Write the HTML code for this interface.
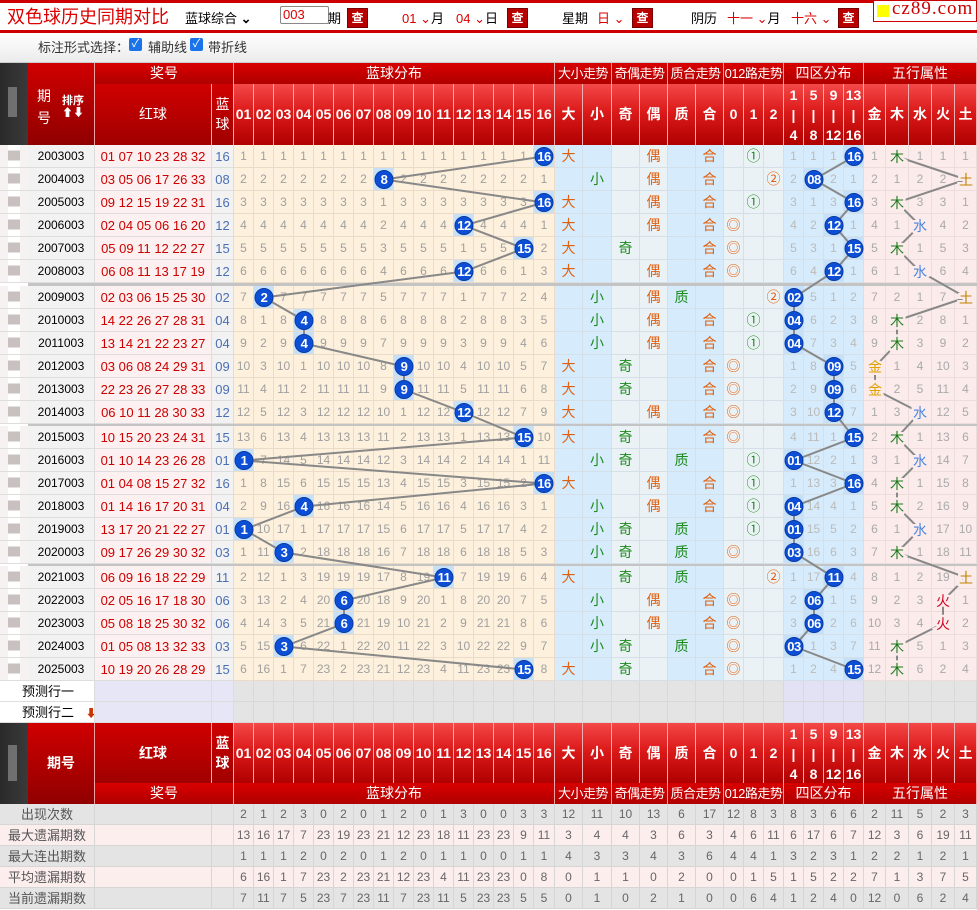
<!DOCTYPE html>
<html><head><meta charset="utf-8"><style>
body{margin:0;width:977px;height:910px;position:relative;overflow:hidden;font-family:"Liberation Sans","Noto Sans CJK SC",sans-serif;font-size:12px;background:#fff}
.a{position:absolute}
.r{position:absolute;left:0;width:977px;height:23px;display:flex}
.r i{font-style:normal;box-sizing:border-box;height:23px;line-height:23px;text-align:center;border-right:1px solid #ddd;border-bottom:1px solid #ddd;flex:none;overflow:hidden;white-space:nowrap}
.r i:nth-child(1){width:28px;background:linear-gradient(#fff 0 25%,#c9c0c0 25% 70%,#fff 70%) 8px 0/12px 100% no-repeat,#f6f2f2;border-right:0}
.r i:nth-child(2){width:67px;background:#f2f2f2}
.r i:nth-child(3){width:117px;background:#fdf0f0;color:#c00;font-size:13px}
.r i:nth-child(4){width:22px;background:#f2f2f2;color:#4a6fb5;font-size:13px}
.r i:nth-child(n+5){width:20px;background:#fdf0dc;color:#a0a0a0;border-color:#eadcc8}
.r i:nth-child(20){width:21px}
.r i:nth-child(n+21){width:28px;background:#d6ebfb;border-color:#d4dfe8;font-size:14px}
.r i:nth-child(22){width:29px}
.r i:nth-child(23),.r i:nth-child(24),.r i:nth-child(27),.r i:nth-child(28),.r i:nth-child(29){background:#ebf2f6}
.r i:nth-child(n+27){width:20px}
.r i:nth-child(n+30){background:#d6ebfb;color:#bbb;font-size:12px}
.r i:nth-child(n+34){background:#fbebeb;color:#aaa;border-color:#ecdcdc}
.r i:nth-child(34),.r i:nth-child(38){width:22px}
.r i:nth-child(35),.r i:nth-child(36),.r i:nth-child(37){width:23px}
.r i.h{background:#c6e0fa}
.r i.o{color:#e06010}.r i.g{color:#1a8a1a}
.sep{position:absolute;left:28px;width:949px;background:#c4c4c4}
.q i,.s i{height:21px;line-height:21px}
.q,.s{height:21px}
.q i:first-child,.s i:first-child{width:0;border:0;background:none}
.q i:nth-child(2),.s i:nth-child(2){width:95px}
.q i:nth-child(2){background:#fff;text-align:left;padding-left:22px;color:#000;font-size:13px}
.q i:nth-child(3),.q i:nth-child(4){background:#e6e6f6}
.q i:nth-child(n+5){background:#e4e4e4;border-color:#d8d8d8}
.q i:nth-child(30),.q i:nth-child(31),.q i:nth-child(32),.q i:nth-child(33){background:#e2e2f4}
.s i{background:#e4e4e4 !important;color:#666 !important;font-size:12px !important;border-color:#d6d6d6 !important}
.s.p i{background:#fdeeee !important}
.s i:nth-child(2){color:#555 !important;font-size:13px !important}
.hd{position:absolute;color:#fff;text-align:center;box-sizing:border-box;border-right:1px solid #f0a0a0;font-size:14px;white-space:nowrap;overflow:hidden}
.h1{background:linear-gradient(#d80000,#b00000);height:21px;line-height:21px}
.sm{font-size:13px;letter-spacing:-0.5px}
.hn{display:flex;position:absolute;height:61px}
.hn div{box-sizing:border-box;border-right:1px solid #f4b0b0;background:linear-gradient(#f44848,#dc1a1a 45%,#b00000);color:#fff;font-weight:bold;font-size:14px;text-align:center;line-height:61px;flex:none}
.hn div.v{line-height:20px;padding-top:1px}
.btn{position:absolute;width:19px;height:18px;background:#b80000;color:#fff;font-size:12px;font-weight:bold;text-align:center;line-height:18px;border:1px solid #700}
.t{position:absolute;font-size:13px;top:8px}
.red{color:#d00}
.cb{position:absolute;top:38px;width:13px;height:13px;background:#1a73e8;border-radius:2px;color:#fff;font-size:11px;line-height:13px;text-align:center}
</style></head><body>

<div class="a" style="left:0;top:0;width:977px;height:3px;background:#c00"></div>
<div class="a" style="left:0;top:30px;width:977px;height:3px;background:#c00"></div>
<div class="a" style="left:7px;top:5px;font-size:18px;color:#d00;font-family:'Noto Sans CJK SC',sans-serif;line-height:22px">双色球历史同期对比</div>
<div class="t" style="left:185px">蓝球综合 <b>⌄</b></div>
<div class="a" style="left:280px;top:6px;width:45px;height:16px;border:1px solid #888;border-radius:2px;color:#d00;font-size:13px;line-height:16px;padding-left:2px;box-sizing:content-box">003</div>
<div class="t" style="left:328px">期</div>
<div class="btn" style="left:347px;top:8px">查</div>
<div class="t red" style="left:402px">01 ⌄<span style="color:#000">月</span></div>
<div class="t red" style="left:456px">04 ⌄<span style="color:#000">日</span></div>
<div class="btn" style="left:507px;top:8px">查</div>
<div class="t" style="left:562px">星期</div>
<div class="t red" style="left:597px">日 ⌄</div>
<div class="btn" style="left:632px;top:8px">查</div>
<div class="t" style="left:691px">阴历</div>
<div class="t red" style="left:727px">十一 ⌄<span style="color:#000">月</span></div>
<div class="t red" style="left:791px">十六 ⌄</div>
<div class="btn" style="left:838px;top:8px">查</div>
<div class="a" style="left:873px;top:0;width:102px;height:20px;border:1px solid #c00;background:#fff"></div>
<div class="a" style="left:877px;top:5px;width:12px;height:12px;background:#ff0"></div>
<div class="a" style="left:892px;top:-2px;font-family:'Liberation Serif',serif;font-size:19px;color:#c00;letter-spacing:1px">cz89.com</div>

<div class="a" style="left:0;top:33px;width:977px;height:29px;background:linear-gradient(#fff,#ebebeb);border-bottom:1px solid #ccc"></div>
<div class="a" style="left:38px;top:37px;font-size:13px;color:#333">标注形式选择：</div>
<div class="cb" style="left:129px">✓</div>
<div class="a" style="left:148px;top:37px;font-size:13px;color:#333">辅助线</div>
<div class="cb" style="left:190px">✓</div>
<div class="a" style="left:208px;top:37px;font-size:13px;color:#333">带折线</div>

<div class="a" style="left:0;top:63px;width:28px;height:82px;background:linear-gradient(90deg,#2a2a2a,#3a3a3a)"><div style="position:absolute;left:8px;top:24px;width:9px;height:30px;background:#8a8a8a;opacity:.7"></div></div>
<div class="hd" style="left:28px;top:63px;width:67px;height:82px;background:linear-gradient(#d00000,#900000)"><div style="position:absolute;left:9px;top:22px;line-height:22px">期<br>号</div><div style="position:absolute;left:34px;top:32px;font-size:11px;font-weight:bold;line-height:12px">排序<br>⬆⬇</div></div>
<div class="hd h1" style="left:95px;top:63px;width:139px">奖号</div>
<div class="hd h1" style="left:234px;top:63px;width:321px">蓝球分布</div>
<div class="hd h1 sm" style="left:555px;top:63px;width:57px">大小走势</div>
<div class="hd h1 sm" style="left:612px;top:63px;width:56px">奇偶走势</div>
<div class="hd h1 sm" style="left:668px;top:63px;width:56px">质合走势</div>
<div class="hd h1 sm" style="left:724px;top:63px;width:60px">012路走势</div>
<div class="hd h1" style="left:784px;top:63px;width:80px">四区分布</div>
<div class="hd h1" style="left:864px;top:63px;width:113px">五行属性</div>
<div class="hn" style="left:95px;top:84px">
<div style="width:117px;background:linear-gradient(#d00000,#a00000);font-weight:normal">红球</div><div class="v" style="width:22px;background:linear-gradient(#d00000,#a00000);font-weight:normal;padding-top:10px">蓝<br>球</div>
<div style="width:20px">01</div><div style="width:20px">02</div><div style="width:20px">03</div><div style="width:20px">04</div><div style="width:20px">05</div><div style="width:20px">06</div><div style="width:20px">07</div><div style="width:20px">08</div><div style="width:20px">09</div><div style="width:20px">10</div><div style="width:20px">11</div><div style="width:20px">12</div><div style="width:20px">13</div><div style="width:20px">14</div><div style="width:20px">15</div><div style="width:21px">16</div>
<div style="width:28px">大</div><div style="width:29px">小</div><div style="width:28px">奇</div><div style="width:28px">偶</div><div style="width:28px">质</div><div style="width:28px">合</div><div style="width:20px">0</div><div style="width:20px">1</div><div style="width:20px">2</div>
<div class="v" style="width:20px">1<br>|<br>4</div><div class="v" style="width:20px">5<br>|<br>8</div><div class="v" style="width:20px">9<br>|<br>12</div><div class="v" style="width:20px">13<br>|<br>16</div>
<div style="width:22px">金</div><div style="width:23px">木</div><div style="width:23px">水</div><div style="width:23px">火</div><div style="width:22px">土</div>
</div>

<div class="r" style="top:145px"><i></i><i>2003003</i><i>01 07 10 23 28 32</i><i>16</i><i>1</i><i>1</i><i>1</i><i>1</i><i>1</i><i>1</i><i>1</i><i>1</i><i>1</i><i>1</i><i>1</i><i>1</i><i>1</i><i>1</i><i>1</i><i class="h"></i><i class="o">大</i><i></i><i></i><i class="o">偶</i><i></i><i class="o">合</i><i></i><i class="g">①</i><i></i><i>1</i><i>1</i><i>1</i><i class="h"></i><i>1</i><i></i><i>1</i><i>1</i><i>1</i></div>
<div class="r" style="top:168px"><i></i><i>2004003</i><i>03 05 06 17 26 33</i><i>08</i><i>2</i><i>2</i><i>2</i><i>2</i><i>2</i><i>2</i><i>2</i><i class="h"></i><i>2</i><i>2</i><i>2</i><i>2</i><i>2</i><i>2</i><i>2</i><i>1</i><i></i><i class="g">小</i><i></i><i class="o">偶</i><i></i><i class="o">合</i><i></i><i></i><i class="o">②</i><i>2</i><i class="h"></i><i>2</i><i>1</i><i>2</i><i>1</i><i>2</i><i>2</i><i></i></div>
<div class="r" style="top:191px"><i></i><i>2005003</i><i>09 12 15 19 22 31</i><i>16</i><i>3</i><i>3</i><i>3</i><i>3</i><i>3</i><i>3</i><i>3</i><i>1</i><i>3</i><i>3</i><i>3</i><i>3</i><i>3</i><i>3</i><i>3</i><i class="h"></i><i class="o">大</i><i></i><i></i><i class="o">偶</i><i></i><i class="o">合</i><i></i><i class="g">①</i><i></i><i>3</i><i>1</i><i>3</i><i class="h"></i><i>3</i><i></i><i>3</i><i>3</i><i>1</i></div>
<div class="r" style="top:214px"><i></i><i>2006003</i><i>02 04 05 06 16 20</i><i>12</i><i>4</i><i>4</i><i>4</i><i>4</i><i>4</i><i>4</i><i>4</i><i>2</i><i>4</i><i>4</i><i>4</i><i class="h"></i><i>4</i><i>4</i><i>4</i><i>1</i><i class="o">大</i><i></i><i></i><i class="o">偶</i><i></i><i class="o">合</i><i class="o">◎</i><i></i><i></i><i>4</i><i>2</i><i class="h"></i><i>1</i><i>4</i><i>1</i><i></i><i>4</i><i>2</i></div>
<div class="r" style="top:237px"><i></i><i>2007003</i><i>05 09 11 12 22 27</i><i>15</i><i>5</i><i>5</i><i>5</i><i>5</i><i>5</i><i>5</i><i>5</i><i>3</i><i>5</i><i>5</i><i>5</i><i>1</i><i>5</i><i>5</i><i class="h"></i><i>2</i><i class="o">大</i><i></i><i class="g">奇</i><i></i><i></i><i class="o">合</i><i class="o">◎</i><i></i><i></i><i>5</i><i>3</i><i>1</i><i class="h"></i><i>5</i><i></i><i>1</i><i>5</i><i>3</i></div>
<div class="r" style="top:260px"><i></i><i>2008003</i><i>06 08 11 13 17 19</i><i>12</i><i>6</i><i>6</i><i>6</i><i>6</i><i>6</i><i>6</i><i>6</i><i>4</i><i>6</i><i>6</i><i>6</i><i class="h"></i><i>6</i><i>6</i><i>1</i><i>3</i><i class="o">大</i><i></i><i></i><i class="o">偶</i><i></i><i class="o">合</i><i class="o">◎</i><i></i><i></i><i>6</i><i>4</i><i class="h"></i><i>1</i><i>6</i><i>1</i><i></i><i>6</i><i>4</i></div>
<div class="sep" style="top:283px;height:3px"></div>
<div class="r" style="top:286px"><i></i><i>2009003</i><i>02 03 06 15 25 30</i><i>02</i><i>7</i><i class="h"></i><i>7</i><i>7</i><i>7</i><i>7</i><i>7</i><i>5</i><i>7</i><i>7</i><i>7</i><i>1</i><i>7</i><i>7</i><i>2</i><i>4</i><i></i><i class="g">小</i><i></i><i class="o">偶</i><i class="g">质</i><i></i><i></i><i></i><i class="o">②</i><i class="h"></i><i>5</i><i>1</i><i>2</i><i>7</i><i>2</i><i>1</i><i>7</i><i></i></div>
<div class="r" style="top:309px"><i></i><i>2010003</i><i>14 22 26 27 28 31</i><i>04</i><i>8</i><i>1</i><i>8</i><i class="h"></i><i>8</i><i>8</i><i>8</i><i>6</i><i>8</i><i>8</i><i>8</i><i>2</i><i>8</i><i>8</i><i>3</i><i>5</i><i></i><i class="g">小</i><i></i><i class="o">偶</i><i></i><i class="o">合</i><i></i><i class="g">①</i><i></i><i class="h"></i><i>6</i><i>2</i><i>3</i><i>8</i><i></i><i>2</i><i>8</i><i>1</i></div>
<div class="r" style="top:332px"><i></i><i>2011003</i><i>13 14 21 22 23 27</i><i>04</i><i>9</i><i>2</i><i>9</i><i class="h"></i><i>9</i><i>9</i><i>9</i><i>7</i><i>9</i><i>9</i><i>9</i><i>3</i><i>9</i><i>9</i><i>4</i><i>6</i><i></i><i class="g">小</i><i></i><i class="o">偶</i><i></i><i class="o">合</i><i></i><i class="g">①</i><i></i><i class="h"></i><i>7</i><i>3</i><i>4</i><i>9</i><i></i><i>3</i><i>9</i><i>2</i></div>
<div class="r" style="top:355px"><i></i><i>2012003</i><i>03 06 08 24 29 31</i><i>09</i><i>10</i><i>3</i><i>10</i><i>1</i><i>10</i><i>10</i><i>10</i><i>8</i><i class="h"></i><i>10</i><i>10</i><i>4</i><i>10</i><i>10</i><i>5</i><i>7</i><i class="o">大</i><i></i><i class="g">奇</i><i></i><i></i><i class="o">合</i><i class="o">◎</i><i></i><i></i><i>1</i><i>8</i><i class="h"></i><i>5</i><i></i><i>1</i><i>4</i><i>10</i><i>3</i></div>
<div class="r" style="top:378px"><i></i><i>2013003</i><i>22 23 26 27 28 33</i><i>09</i><i>11</i><i>4</i><i>11</i><i>2</i><i>11</i><i>11</i><i>11</i><i>9</i><i class="h"></i><i>11</i><i>11</i><i>5</i><i>11</i><i>11</i><i>6</i><i>8</i><i class="o">大</i><i></i><i class="g">奇</i><i></i><i></i><i class="o">合</i><i class="o">◎</i><i></i><i></i><i>2</i><i>9</i><i class="h"></i><i>6</i><i></i><i>2</i><i>5</i><i>11</i><i>4</i></div>
<div class="r" style="top:401px"><i></i><i>2014003</i><i>06 10 11 28 30 33</i><i>12</i><i>12</i><i>5</i><i>12</i><i>3</i><i>12</i><i>12</i><i>12</i><i>10</i><i>1</i><i>12</i><i>12</i><i class="h"></i><i>12</i><i>12</i><i>7</i><i>9</i><i class="o">大</i><i></i><i></i><i class="o">偶</i><i></i><i class="o">合</i><i class="o">◎</i><i></i><i></i><i>3</i><i>10</i><i class="h"></i><i>7</i><i>1</i><i>3</i><i></i><i>12</i><i>5</i></div>
<div class="sep" style="top:424px;height:2px"></div>
<div class="r" style="top:426px"><i></i><i>2015003</i><i>10 15 20 23 24 31</i><i>15</i><i>13</i><i>6</i><i>13</i><i>4</i><i>13</i><i>13</i><i>13</i><i>11</i><i>2</i><i>13</i><i>13</i><i>1</i><i>13</i><i>13</i><i class="h"></i><i>10</i><i class="o">大</i><i></i><i class="g">奇</i><i></i><i></i><i class="o">合</i><i class="o">◎</i><i></i><i></i><i>4</i><i>11</i><i>1</i><i class="h"></i><i>2</i><i></i><i>1</i><i>13</i><i>6</i></div>
<div class="r" style="top:449px"><i></i><i>2016003</i><i>01 10 14 23 26 28</i><i>01</i><i class="h"></i><i>7</i><i>14</i><i>5</i><i>14</i><i>14</i><i>14</i><i>12</i><i>3</i><i>14</i><i>14</i><i>2</i><i>14</i><i>14</i><i>1</i><i>11</i><i></i><i class="g">小</i><i class="g">奇</i><i></i><i class="g">质</i><i></i><i></i><i class="g">①</i><i></i><i class="h"></i><i>12</i><i>2</i><i>1</i><i>3</i><i>1</i><i></i><i>14</i><i>7</i></div>
<div class="r" style="top:472px"><i></i><i>2017003</i><i>01 04 08 15 27 32</i><i>16</i><i>1</i><i>8</i><i>15</i><i>6</i><i>15</i><i>15</i><i>15</i><i>13</i><i>4</i><i>15</i><i>15</i><i>3</i><i>15</i><i>15</i><i>2</i><i class="h"></i><i class="o">大</i><i></i><i></i><i class="o">偶</i><i></i><i class="o">合</i><i></i><i class="g">①</i><i></i><i>1</i><i>13</i><i>3</i><i class="h"></i><i>4</i><i></i><i>1</i><i>15</i><i>8</i></div>
<div class="r" style="top:495px"><i></i><i>2018003</i><i>01 14 16 17 20 31</i><i>04</i><i>2</i><i>9</i><i>16</i><i class="h"></i><i>16</i><i>16</i><i>16</i><i>14</i><i>5</i><i>16</i><i>16</i><i>4</i><i>16</i><i>16</i><i>3</i><i>1</i><i></i><i class="g">小</i><i></i><i class="o">偶</i><i></i><i class="o">合</i><i></i><i class="g">①</i><i></i><i class="h"></i><i>14</i><i>4</i><i>1</i><i>5</i><i></i><i>2</i><i>16</i><i>9</i></div>
<div class="r" style="top:518px"><i></i><i>2019003</i><i>13 17 20 21 22 27</i><i>01</i><i class="h"></i><i>10</i><i>17</i><i>1</i><i>17</i><i>17</i><i>17</i><i>15</i><i>6</i><i>17</i><i>17</i><i>5</i><i>17</i><i>17</i><i>4</i><i>2</i><i></i><i class="g">小</i><i class="g">奇</i><i></i><i class="g">质</i><i></i><i></i><i class="g">①</i><i></i><i class="h"></i><i>15</i><i>5</i><i>2</i><i>6</i><i>1</i><i></i><i>17</i><i>10</i></div>
<div class="r" style="top:541px"><i></i><i>2020003</i><i>09 17 26 29 30 32</i><i>03</i><i>1</i><i>11</i><i class="h"></i><i>2</i><i>18</i><i>18</i><i>18</i><i>16</i><i>7</i><i>18</i><i>18</i><i>6</i><i>18</i><i>18</i><i>5</i><i>3</i><i></i><i class="g">小</i><i class="g">奇</i><i></i><i class="g">质</i><i></i><i class="o">◎</i><i></i><i></i><i class="h"></i><i>16</i><i>6</i><i>3</i><i>7</i><i></i><i>1</i><i>18</i><i>11</i></div>
<div class="sep" style="top:564px;height:2px"></div>
<div class="r" style="top:566px"><i></i><i>2021003</i><i>06 09 16 18 22 29</i><i>11</i><i>2</i><i>12</i><i>1</i><i>3</i><i>19</i><i>19</i><i>19</i><i>17</i><i>8</i><i>19</i><i class="h"></i><i>7</i><i>19</i><i>19</i><i>6</i><i>4</i><i class="o">大</i><i></i><i class="g">奇</i><i></i><i class="g">质</i><i></i><i></i><i></i><i class="o">②</i><i>1</i><i>17</i><i class="h"></i><i>4</i><i>8</i><i>1</i><i>2</i><i>19</i><i></i></div>
<div class="r" style="top:589px"><i></i><i>2022003</i><i>02 05 16 17 18 30</i><i>06</i><i>3</i><i>13</i><i>2</i><i>4</i><i>20</i><i class="h"></i><i>20</i><i>18</i><i>9</i><i>20</i><i>1</i><i>8</i><i>20</i><i>20</i><i>7</i><i>5</i><i></i><i class="g">小</i><i></i><i class="o">偶</i><i></i><i class="o">合</i><i class="o">◎</i><i></i><i></i><i>2</i><i class="h"></i><i>1</i><i>5</i><i>9</i><i>2</i><i>3</i><i></i><i>1</i></div>
<div class="r" style="top:612px"><i></i><i>2023003</i><i>05 08 18 25 30 32</i><i>06</i><i>4</i><i>14</i><i>3</i><i>5</i><i>21</i><i class="h"></i><i>21</i><i>19</i><i>10</i><i>21</i><i>2</i><i>9</i><i>21</i><i>21</i><i>8</i><i>6</i><i></i><i class="g">小</i><i></i><i class="o">偶</i><i></i><i class="o">合</i><i class="o">◎</i><i></i><i></i><i>3</i><i class="h"></i><i>2</i><i>6</i><i>10</i><i>3</i><i>4</i><i></i><i>2</i></div>
<div class="r" style="top:635px"><i></i><i>2024003</i><i>01 05 08 13 32 33</i><i>03</i><i>5</i><i>15</i><i class="h"></i><i>6</i><i>22</i><i>1</i><i>22</i><i>20</i><i>11</i><i>22</i><i>3</i><i>10</i><i>22</i><i>22</i><i>9</i><i>7</i><i></i><i class="g">小</i><i class="g">奇</i><i></i><i class="g">质</i><i></i><i class="o">◎</i><i></i><i></i><i class="h"></i><i>1</i><i>3</i><i>7</i><i>11</i><i></i><i>5</i><i>1</i><i>3</i></div>
<div class="r" style="top:658px"><i></i><i>2025003</i><i>10 19 20 26 28 29</i><i>15</i><i>6</i><i>16</i><i>1</i><i>7</i><i>23</i><i>2</i><i>23</i><i>21</i><i>12</i><i>23</i><i>4</i><i>11</i><i>23</i><i>23</i><i class="h"></i><i>8</i><i class="o">大</i><i></i><i class="g">奇</i><i></i><i></i><i class="o">合</i><i class="o">◎</i><i></i><i></i><i>1</i><i>2</i><i>4</i><i class="h"></i><i>12</i><i></i><i>6</i><i>2</i><i>4</i></div>

<div class="r q" style="top:681px"><i></i><i>预测行一</i><i></i><i></i><i></i><i></i><i></i><i></i><i></i><i></i><i></i><i></i><i></i><i></i><i></i><i></i><i></i><i></i><i></i><i></i><i></i><i></i><i></i><i></i><i></i><i></i><i></i><i></i><i></i><i></i><i></i><i></i><i></i><i></i><i></i><i></i><i></i><i></i></div>
<div class="r q" style="top:702px"><i></i><i>预测行二 <span style="color:#c30;font-size:11px;margin-left:8px">⬇</span></i><i></i><i></i><i></i><i></i><i></i><i></i><i></i><i></i><i></i><i></i><i></i><i></i><i></i><i></i><i></i><i></i><i></i><i></i><i></i><i></i><i></i><i></i><i></i><i></i><i></i><i></i><i></i><i></i><i></i><i></i><i></i><i></i><i></i><i></i><i></i><i></i></div>

<div class="a" style="left:0;top:723px;width:28px;height:81px;background:linear-gradient(90deg,#2a2a2a,#3a3a3a)"><div style="position:absolute;left:8px;top:22px;width:9px;height:36px;background:#8a8a8a;opacity:.7"></div></div>
<div class="hd" style="left:28px;top:723px;width:67px;height:81px;background:linear-gradient(#d00000,#900000);line-height:81px;font-weight:bold">期号</div>
<div class="hn" style="left:95px;top:723px;height:60px">
<div style="width:117px;background:linear-gradient(#d00000,#a00000);line-height:60px">红球</div><div class="v" style="width:22px;background:linear-gradient(#d00000,#a00000);padding-top:10px">蓝<br>球</div>
<div style="width:20px;line-height:60px">01</div><div style="width:20px;line-height:60px">02</div><div style="width:20px;line-height:60px">03</div><div style="width:20px;line-height:60px">04</div><div style="width:20px;line-height:60px">05</div><div style="width:20px;line-height:60px">06</div><div style="width:20px;line-height:60px">07</div><div style="width:20px;line-height:60px">08</div><div style="width:20px;line-height:60px">09</div><div style="width:20px;line-height:60px">10</div><div style="width:20px;line-height:60px">11</div><div style="width:20px;line-height:60px">12</div><div style="width:20px;line-height:60px">13</div><div style="width:20px;line-height:60px">14</div><div style="width:20px;line-height:60px">15</div><div style="width:21px;line-height:60px">16</div>
<div style="width:28px;line-height:60px">大</div><div style="width:29px;line-height:60px">小</div><div style="width:28px;line-height:60px">奇</div><div style="width:28px;line-height:60px">偶</div><div style="width:28px;line-height:60px">质</div><div style="width:28px;line-height:60px">合</div><div style="width:20px;line-height:60px">0</div><div style="width:20px;line-height:60px">1</div><div style="width:20px;line-height:60px">2</div>
<div class="v" style="width:20px">1<br>|<br>4</div><div class="v" style="width:20px">5<br>|<br>8</div><div class="v" style="width:20px">9<br>|<br>12</div><div class="v" style="width:20px">13<br>|<br>16</div>
<div style="width:22px;line-height:60px">金</div><div style="width:23px;line-height:60px">木</div><div style="width:23px;line-height:60px">水</div><div style="width:23px;line-height:60px">火</div><div style="width:22px;line-height:60px">土</div>
</div>
<div class="hd h1" style="left:95px;top:783px;width:139px">奖号</div>
<div class="hd h1" style="left:234px;top:783px;width:321px">蓝球分布</div>
<div class="hd h1 sm" style="left:555px;top:783px;width:57px">大小走势</div>
<div class="hd h1 sm" style="left:612px;top:783px;width:56px">奇偶走势</div>
<div class="hd h1 sm" style="left:668px;top:783px;width:56px">质合走势</div>
<div class="hd h1 sm" style="left:724px;top:783px;width:60px">012路走势</div>
<div class="hd h1" style="left:784px;top:783px;width:80px">四区分布</div>
<div class="hd h1" style="left:864px;top:783px;width:113px">五行属性</div>

<div class="r s" style="top:804px"><i></i><i>出现次数</i><i></i><i></i><i>2</i><i>1</i><i>2</i><i>3</i><i>0</i><i>2</i><i>0</i><i>1</i><i>2</i><i>0</i><i>1</i><i>3</i><i>0</i><i>0</i><i>3</i><i>3</i><i>12</i><i>11</i><i>10</i><i>13</i><i>6</i><i>17</i><i>12</i><i>8</i><i>3</i><i>8</i><i>3</i><i>6</i><i>6</i><i>2</i><i>11</i><i>5</i><i>2</i><i>3</i></div>
<div class="r s p" style="top:825px"><i></i><i>最大遗漏期数</i><i></i><i></i><i>13</i><i>16</i><i>17</i><i>7</i><i>23</i><i>19</i><i>23</i><i>21</i><i>12</i><i>23</i><i>18</i><i>11</i><i>23</i><i>23</i><i>9</i><i>11</i><i>3</i><i>4</i><i>4</i><i>3</i><i>6</i><i>3</i><i>4</i><i>6</i><i>11</i><i>6</i><i>17</i><i>6</i><i>7</i><i>12</i><i>3</i><i>6</i><i>19</i><i>11</i></div>
<div class="r s" style="top:846px"><i></i><i>最大连出期数</i><i></i><i></i><i>1</i><i>1</i><i>1</i><i>2</i><i>0</i><i>2</i><i>0</i><i>1</i><i>2</i><i>0</i><i>1</i><i>1</i><i>0</i><i>0</i><i>1</i><i>1</i><i>4</i><i>3</i><i>3</i><i>4</i><i>3</i><i>6</i><i>4</i><i>4</i><i>1</i><i>3</i><i>2</i><i>3</i><i>1</i><i>2</i><i>2</i><i>1</i><i>2</i><i>1</i></div>
<div class="r s p" style="top:867px"><i></i><i>平均遗漏期数</i><i></i><i></i><i>6</i><i>16</i><i>1</i><i>7</i><i>23</i><i>2</i><i>23</i><i>21</i><i>12</i><i>23</i><i>4</i><i>11</i><i>23</i><i>23</i><i>0</i><i>8</i><i>0</i><i>1</i><i>1</i><i>0</i><i>2</i><i>0</i><i>0</i><i>1</i><i>5</i><i>1</i><i>5</i><i>2</i><i>2</i><i>7</i><i>1</i><i>3</i><i>7</i><i>5</i></div>
<div class="r s" style="top:888px"><i></i><i>当前遗漏期数</i><i></i><i></i><i>7</i><i>11</i><i>7</i><i>5</i><i>23</i><i>7</i><i>23</i><i>11</i><i>7</i><i>23</i><i>11</i><i>5</i><i>23</i><i>23</i><i>5</i><i>5</i><i>0</i><i>1</i><i>0</i><i>2</i><i>1</i><i>0</i><i>0</i><i>6</i><i>4</i><i>1</i><i>2</i><i>4</i><i>0</i><i>12</i><i>0</i><i>6</i><i>2</i><i>4</i></div>

<svg class="a" style="left:0;top:0" width="977" height="910" font-family="Liberation Sans, sans-serif">
<g fill="none" stroke="#888" stroke-width="2">
<polyline points="544,156.5 384,179.5 544,202.5 464,225.5 524,248.5 464,271.5 264,297.5 304,320.5 304,343.5 404,366.5 404,389.5 464,412.5 524,437.5 244,460.5 544,483.5 304,506.5 244,529.5 284,552.5 444,577.5 344,600.5 344,623.5 284,646.5 524,669.5"/>
<polyline points="854,156.5 814,179.5 854,202.5 834,225.5 854,248.5 834,271.5 794,297.5 794,320.5 794,343.5 834,366.5 834,389.5 834,412.5 854,437.5 794,460.5 854,483.5 794,506.5 794,529.5 794,552.5 834,577.5 814,600.5 814,623.5 794,646.5 854,669.5"/>
<polyline points="897,156.5 966,179.5 897,202.5 920,225.5 897,248.5 920,271.5 966,297.5 897,320.5 897,343.5 875,366.5 875,389.5 920,412.5 897,437.5 920,460.5 897,483.5 897,506.5 920,529.5 897,552.5 966,577.5 943,600.5 943,623.5 897,646.5 897,669.5"/>
</g>
<g fill="#0c4fd6" stroke="#0a3aa0" stroke-width="1">
<circle cx="544" cy="156.5" r="9"/><circle cx="384" cy="179.5" r="9"/><circle cx="544" cy="202.5" r="9"/><circle cx="464" cy="225.5" r="9"/><circle cx="524" cy="248.5" r="9"/><circle cx="464" cy="271.5" r="9"/><circle cx="264" cy="297.5" r="9"/><circle cx="304" cy="320.5" r="9"/><circle cx="304" cy="343.5" r="9"/><circle cx="404" cy="366.5" r="9"/><circle cx="404" cy="389.5" r="9"/><circle cx="464" cy="412.5" r="9"/><circle cx="524" cy="437.5" r="9"/><circle cx="244" cy="460.5" r="9"/><circle cx="544" cy="483.5" r="9"/><circle cx="304" cy="506.5" r="9"/><circle cx="244" cy="529.5" r="9"/><circle cx="284" cy="552.5" r="9"/><circle cx="444" cy="577.5" r="9"/><circle cx="344" cy="600.5" r="9"/><circle cx="344" cy="623.5" r="9"/><circle cx="284" cy="646.5" r="9"/><circle cx="524" cy="669.5" r="9"/>
<circle cx="854" cy="156.5" r="9"/><circle cx="814" cy="179.5" r="9"/><circle cx="854" cy="202.5" r="9"/><circle cx="834" cy="225.5" r="9"/><circle cx="854" cy="248.5" r="9"/><circle cx="834" cy="271.5" r="9"/><circle cx="794" cy="297.5" r="9"/><circle cx="794" cy="320.5" r="9"/><circle cx="794" cy="343.5" r="9"/><circle cx="834" cy="366.5" r="9"/><circle cx="834" cy="389.5" r="9"/><circle cx="834" cy="412.5" r="9"/><circle cx="854" cy="437.5" r="9"/><circle cx="794" cy="460.5" r="9"/><circle cx="854" cy="483.5" r="9"/><circle cx="794" cy="506.5" r="9"/><circle cx="794" cy="529.5" r="9"/><circle cx="794" cy="552.5" r="9"/><circle cx="834" cy="577.5" r="9"/><circle cx="814" cy="600.5" r="9"/><circle cx="814" cy="623.5" r="9"/><circle cx="794" cy="646.5" r="9"/><circle cx="854" cy="669.5" r="9"/>
</g>
<g fill="#fff" font-size="13" font-weight="bold" text-anchor="middle" letter-spacing="-0.5">
<text x="544" y="161">16</text><text x="384" y="184">8</text><text x="544" y="207">16</text><text x="464" y="230">12</text><text x="524" y="253">15</text><text x="464" y="276">12</text><text x="264" y="302">2</text><text x="304" y="325">4</text><text x="304" y="348">4</text><text x="404" y="371">9</text><text x="404" y="394">9</text><text x="464" y="417">12</text><text x="524" y="442">15</text><text x="244" y="465">1</text><text x="544" y="488">16</text><text x="304" y="511">4</text><text x="244" y="534">1</text><text x="284" y="557">3</text><text x="444" y="582">11</text><text x="344" y="605">6</text><text x="344" y="628">6</text><text x="284" y="651">3</text><text x="524" y="674">15</text>
<text x="854" y="161">16</text><text x="814" y="184">08</text><text x="854" y="207">16</text><text x="834" y="230">12</text><text x="854" y="253">15</text><text x="834" y="276">12</text><text x="794" y="302">02</text><text x="794" y="325">04</text><text x="794" y="348">04</text><text x="834" y="371">09</text><text x="834" y="394">09</text><text x="834" y="417">12</text><text x="854" y="442">15</text><text x="794" y="465">01</text><text x="854" y="488">16</text><text x="794" y="511">04</text><text x="794" y="534">01</text><text x="794" y="557">03</text><text x="834" y="582">11</text><text x="814" y="605">06</text><text x="814" y="628">06</text><text x="794" y="651">03</text><text x="854" y="674">15</text>
</g>
<g font-size="14" text-anchor="middle" font-family="Noto Sans CJK SC, sans-serif" stroke="#fbebeb" stroke-width="5" paint-order="stroke">
<text x="897" y="162" fill="#1a7a1a">木</text><text x="966" y="185" fill="#c08000">土</text><text x="897" y="208" fill="#1a7a1a">木</text><text x="920" y="231" fill="#4a86e0">水</text><text x="897" y="254" fill="#1a7a1a">木</text><text x="920" y="277" fill="#4a86e0">水</text><text x="966" y="303" fill="#c08000">土</text><text x="897" y="326" fill="#1a7a1a">木</text><text x="897" y="349" fill="#1a7a1a">木</text><text x="875" y="372" fill="#e0a000">金</text><text x="875" y="395" fill="#e0a000">金</text><text x="920" y="418" fill="#4a86e0">水</text><text x="897" y="443" fill="#1a7a1a">木</text><text x="920" y="466" fill="#4a86e0">水</text><text x="897" y="489" fill="#1a7a1a">木</text><text x="897" y="512" fill="#1a7a1a">木</text><text x="920" y="535" fill="#4a86e0">水</text><text x="897" y="558" fill="#1a7a1a">木</text><text x="966" y="583" fill="#c08000">土</text><text x="943" y="606" fill="#d00020">火</text><text x="943" y="629" fill="#d00020">火</text><text x="897" y="652" fill="#1a7a1a">木</text><text x="897" y="675" fill="#1a7a1a">木</text>
</g>
</svg>
</body></html>
